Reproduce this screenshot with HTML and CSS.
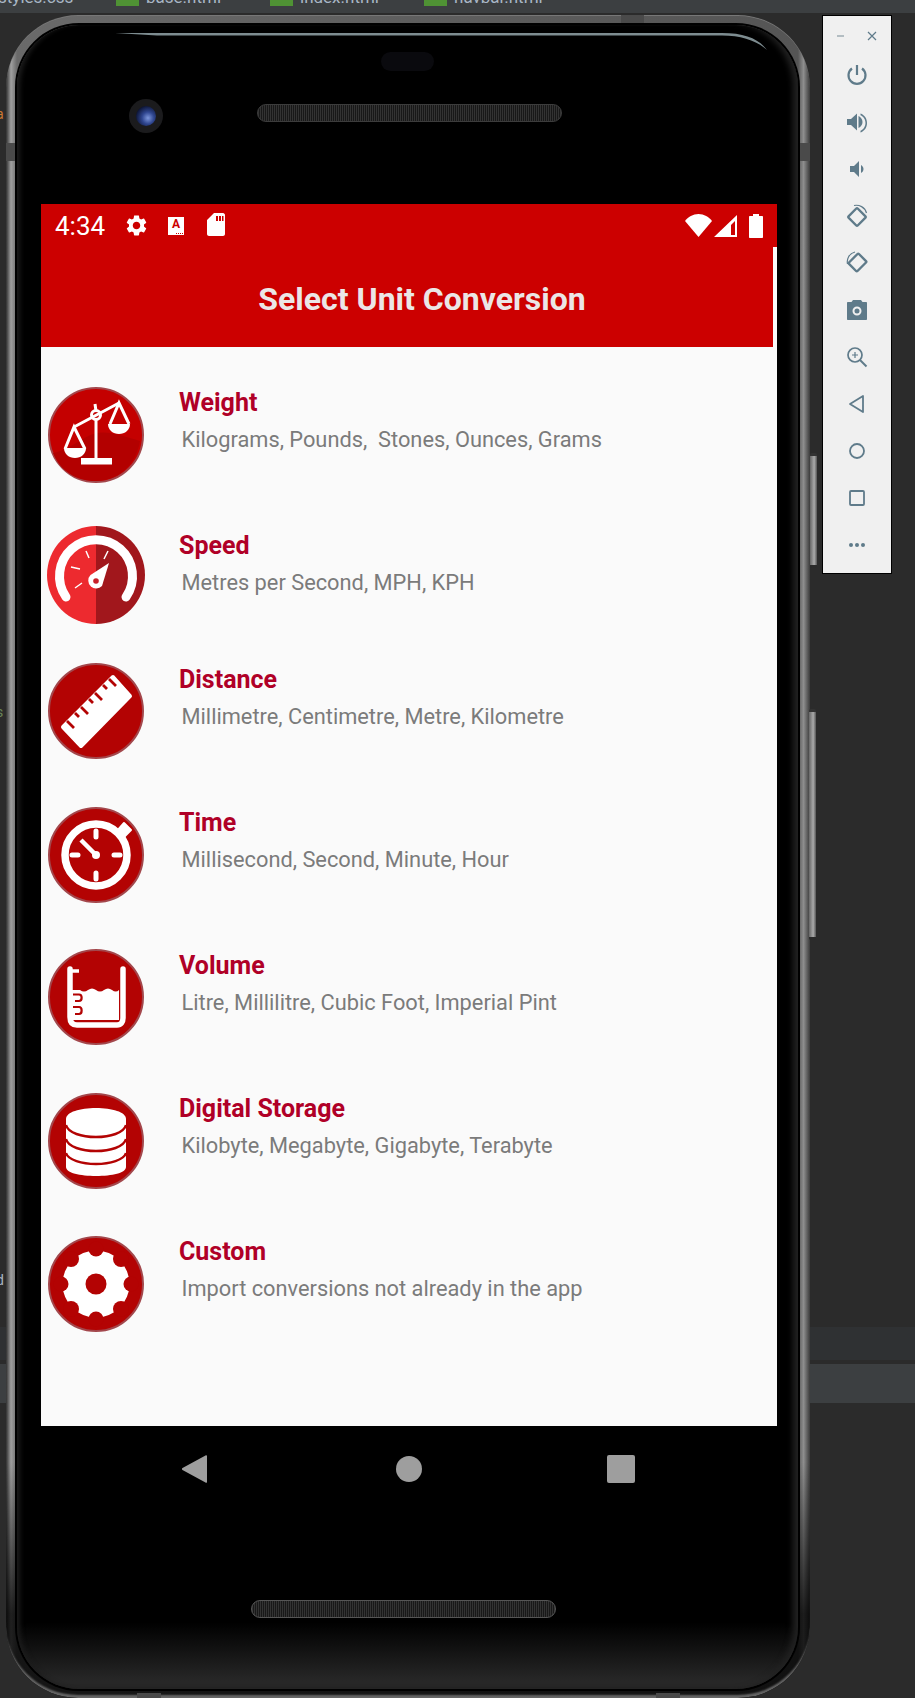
FILE: index.html
```html
<!DOCTYPE html>
<html lang="en">
<head>
    <meta charset="UTF-8">
    <title>Select Unit Conversion</title>
    <link rel="stylesheet" href="styles.css">
</head>
<body>

<!-- IDE behind the emulator -->
<div class="ide-tabs">
    <span class="tab tab-first">styles.css</span>
    <span class="tab"><i></i>base.html</span>
    <span class="tab"><i></i>index.html</span>
    <span class="tab"><i></i>navbar.html</span>
</div>
<div class="band band-a"></div>
<div class="band band-b"></div>
<span class="edge edge-a">a</span>
<span class="edge edge-s">s</span>
<span class="edge edge-d">d</span>

<div class="desk">
    <div class="phone">
        <span class="notch notch-lt"></span>
        <span class="notch notch-rt"></span>
        <span class="notch notch-top"></span>
        <span class="notch notch-bl"></span>
        <span class="notch notch-br"></span>
        <span class="side-btn side-power"></span>
        <span class="side-btn side-volume"></span>

        <div class="bezel">
            <svg class="glare" width="781" height="40" viewBox="0 0 781 40">
                <path d="M98 8H705C728 8 742 14 750 25C740 16 725 10.500 705 10.500H140z" fill="#7d8c90"/>
            </svg>

            <div class="hw-top">
                <div class="sensor"></div>
                <div class="cam-row">
                    <div class="camera"><span class="lens"></span></div>
                    <div class="speaker"></div>
                </div>
            </div>

            <div class="screen">
                <div class="status">
                    <span class="clock">4:34</span>
                    <svg class="st-gear" width="25" height="25" viewBox="0 0 24 24"><path fill="#fff" d="M19.14 12.94c.04-.3.06-.61.06-.94 0-.32-.02-.64-.07-.94l2.03-1.58c.18-.14.23-.41.12-.61l-1.92-3.32c-.12-.22-.37-.29-.59-.22l-2.39.96c-.5-.38-1.03-.7-1.62-.94l-.36-2.54c-.04-.24-.24-.41-.48-.41h-3.84c-.24 0-.43.17-.47.41l-.36 2.54c-.59.24-1.13.57-1.62.94l-2.39-.96c-.22-.08-.47 0-.59.22L2.74 8.87c-.12.21-.08.47.12.61l2.03 1.58c-.05.3-.09.63-.09.94s.02.64.07.94l-2.03 1.58c-.18.14-.23.41-.12.61l1.92 3.32c.12.22.37.29.59.22l2.39-.96c.5.38 1.03.7 1.62.94l.36 2.54c.05.24.24.41.48.41h3.84c.24 0 .44-.17.47-.41l.36-2.54c.59-.24 1.13-.56 1.62-.94l2.39.96c.22.08.47 0 .59-.22l1.92-3.32c.12-.22.07-.47-.12-.61l-2.01-1.58zM12 15.6c-1.98 0-3.6-1.62-3.6-3.6s1.62-3.6 3.6-3.6 3.6 1.62 3.6 3.6-1.62 3.6-3.6 3.6z"/></svg>
                    <span class="st-a">A<i></i></span>
                    <svg class="st-sd" width="18" height="23" viewBox="0 0 18 23"><path fill="#fff" d="M7 0H16C17 0 18 1 18 2V21C18 22 17 23 16 23H2C1 23 0 22 0 21V7zM9 3V8H11V3zM12 3V8H14V3zM15 3V8H16.5V3z"/></svg>
                    <span class="st-gap"></span>
                    <svg width="27" height="23" viewBox="0 0 27 23"><path fill="#fff" d="M0 7C3 3 8 0 13.5 0S24 3 27 7L13.5 23z"/></svg>
                    <svg class="st-signal" width="23" height="22" viewBox="0 0 23 22"><path fill="#fff" fill-rule="evenodd" d="M23 0V22H0zM21 6L17 10V20H21z"/></svg>
                    <svg class="st-batt" width="14" height="24" viewBox="0 0 14 24"><path fill="#fff" d="M4 0H10V2H13C13.600 2 14 2.400 14 3V23C14 23.600 13.600 24 13 24H1C.4 24 0 23.600 0 23V3C0 2.400 .4 2 1 2H4z"/></svg>
                </div>
                <div class="app-bar">Select Unit Conversion</div>

                <ul class="units">
                    <li class="row">
                        <svg class="ico" width="96" height="96" viewBox="0 0 96 96">
                            <circle cx="48" cy="48" r="47" fill="#c40000" stroke="#a3474c" stroke-width="2"/>
                            <path d="M5 66C25 62 35 48 50 46C62 44 78 50 92 54C88 78 70 94 48 94C28 94 12 84 5 66z" fill="#b30000"/>
                            <g fill="none" stroke="#fff" stroke-width="3">
                                <path d="M26 40L71 16M47 17L48 24"/>
                                <path d="M48 33V72"/>
                                <circle cx="48" cy="28" r="4.500"/>
                                <path d="M17 62L26 40L37 62M62 37L71 16L81 37"/>
                            </g>
                            <path d="M16 61H38C38 67 33 71 27 71S16 67 16 61zM60 37H82C82 43 77 47 71 47S60 43 60 37z" fill="#fff"/>
                            <rect x="33" y="71" width="31" height="6.500" fill="#fff"/>
                        </svg>
                        <div class="txt">
                            <h3>Weight</h3>
                            <p>Kilograms, Pounds,  Stones, Ounces, Grams</p>
                        </div>
                    </li>
                    <li class="row row-speed">
                        <svg class="ico ico-speed" width="98" height="98" viewBox="0 0 98 98">
                            <path d="M49 0A49 49 0 0 0 49 98z" fill="#ed2a2f"/>
                            <path d="M49 0A49 49 0 0 1 49 98z" fill="#a1171c"/>
                            <path d="M19 71A36.500 36.500 0 1 1 79 71" fill="none" stroke="#fff" stroke-width="9" stroke-linecap="round"/>
                            <path d="M39 25L42 32M24 41L33 43M28 62L35 57M61 25L57 33" fill="none" stroke="#fff" stroke-width="1.500"/>
                            <path d="M62 37L55 60A7.500 7.500 0 1 1 43.500 49z" fill="#fff"/>
                            <circle cx="49" cy="55" r="2.800" fill="#c8202a"/>
                        </svg>
                        <div class="txt">
                            <h3>Speed</h3>
                            <p>Metres per Second, MPH, KPH</p>
                        </div>
                    </li>
                    <li class="row">
                        <svg class="ico ico-up" width="96" height="96" viewBox="0 0 96 96">
                            <circle cx="48" cy="48" r="47" fill="#b30303" stroke="#a3474c" stroke-width="2"/>
                            <path d="M15 64L65 14L82 33L33 83z" fill="#fff" stroke="#fff" stroke-width="4" stroke-linejoin="round"/>
                            <path d="M19 58L26 65M27 50L31 54M33 44L40 51M41 36L45 40M47 30L54 37M55 22L59 26M61 16L68 23" fill="none" stroke="#b30303" stroke-width="2.800"/>
                        </svg>
                        <div class="txt">
                            <h3>Distance</h3>
                            <p>Millimetre, Centimetre, Metre, Kilometre</p>
                        </div>
                    </li>
                    <li class="row">
                        <svg class="ico" width="96" height="96" viewBox="0 0 96 96">
                            <circle cx="48" cy="48" r="47" fill="#b30303" stroke="#a3474c" stroke-width="2"/>
                            <circle cx="48" cy="48" r="31" fill="none" stroke="#fff" stroke-width="7.500"/>
                            <path d="M69 24L76 16L83 23L75 31z" fill="#fff" stroke="#fff" stroke-width="2" stroke-linejoin="round"/>
                            <path d="M48 24V30M48 66V72M24 48H30M66 48H72" stroke="#fff" stroke-width="5" stroke-linecap="round"/>
                            <path d="M33 33L48 48" stroke="#fff" stroke-width="4.500"/>
                            <circle cx="48" cy="48" r="4" fill="#fff"/>
                        </svg>
                        <div class="txt">
                            <h3>Time</h3>
                            <p>Millisecond, Second, Minute, Hour</p>
                        </div>
                    </li>
                    <li class="row">
                        <svg class="ico ico-up" width="96" height="96" viewBox="0 0 96 96">
                            <circle cx="48" cy="48" r="47" fill="#b30303" stroke="#a3474c" stroke-width="2"/>
                            <path d="M22 20V68C22 73 24 76 29 76H69C73 76 75 73 75 69V20" fill="none" stroke="#fff" stroke-width="5.500" stroke-linecap="round"/>
                            <path d="M24 22H31" stroke="#fff" stroke-width="3.500"/>
                            <path d="M32 41Q36 44 40 41T48 41T56 41T64 41T71 41V71H24V41z" fill="#fff"/>
                            <path d="M25 45.500H31C34.500 45.500 34.500 52 31 52H27M25 58H31C34.500 58 34.500 65 31 65H27" fill="none" stroke="#b30303" stroke-width="2.200"/>
                        </svg>
                        <div class="txt">
                            <h3>Volume</h3>
                            <p>Litre, Millilitre, Cubic Foot, Imperial Pint</p>
                        </div>
                    </li>
                    <li class="row">
                        <svg class="ico" width="96" height="96" viewBox="0 0 96 96">
                            <circle cx="48" cy="48" r="47" fill="#b30303" stroke="#a3474c" stroke-width="2"/>
                            <path d="M18 26C18 19 32 15 48 15S78 19 78 26V74C78 80 64 83 48 83S18 80 18 74z" fill="#fff"/>
                            <path d="M18 32C20 40 34 44 48 44S76 40 78 32M18 46C20 54 34 58 48 58S76 54 78 46M18 60C20 67 34 71 48 71S76 67 78 60" fill="none" stroke="#b30303" stroke-width="2.400"/>
                        </svg>
                        <div class="txt">
                            <h3>Digital Storage</h3>
                            <p>Kilobyte, Megabyte, Gigabyte, Terabyte</p>
                        </div>
                    </li>
                    <li class="row">
                        <svg class="ico" width="96" height="96" viewBox="0 0 96 96">
                            <circle cx="48" cy="48" r="47" fill="#b30303" stroke="#a3474c" stroke-width="2"/>
                            <circle cx="48" cy="48" r="33.500" fill="#fff"/>
                            <g fill="#b30303">
                                <circle cx="48" cy="13" r="7.500"/><circle cx="83" cy="48" r="7.500"/>
                                <circle cx="48" cy="83" r="7.500"/><circle cx="13" cy="48" r="7.500"/>
                                <circle cx="73" cy="23" r="8"/><circle cx="73" cy="73" r="8"/>
                                <circle cx="23" cy="73" r="8"/><circle cx="23" cy="23" r="8"/>
                                <circle cx="48" cy="48" r="10.500"/>
                            </g>
                        </svg>
                        <div class="txt">
                            <h3>Custom</h3>
                            <p>Import conversions not already in the app</p>
                        </div>
                    </li>
                </ul>
            </div>

            <div class="nav-keys">
                <svg width="25" height="28" viewBox="0 0 25 28"><path fill="#9e9e9e" d="M25 1V27C25 28 24 28 23.500 27.500L.5 15C-.2 14.500-.2 13.500 .5 13L23.500 .5C24 0 25 0 25 1z"/></svg>
                <span class="key-home"></span>
                <span class="key-recent"></span>
            </div>
            <div class="speaker speaker-low"></div>
        </div>
    </div>

    <!-- emulator side toolbar -->
    <div class="toolbar">
        <div class="win-btns">
            <svg width="10" height="10" viewBox="0 0 10 10"><path d="M1 5H8" stroke="#8a9aa3" stroke-width="1.200"/></svg>
            <svg width="10" height="10" viewBox="0 0 10 10"><path d="M1 1L9 9M9 1L1 9" stroke="#5f7b8a" stroke-width="1.200"/></svg>
        </div>
        <svg width="24" height="24" viewBox="0 0 24 24"><path d="M12 2V12M7 5.500A8.500 8.500 0 1 0 17 5.500" fill="none" stroke="#5f7b8a" stroke-width="2.200"/></svg>
        <svg width="24" height="24" viewBox="0 0 24 24"><path fill="#5f7b8a" d="M2 9v6h4l6 5.500V3.500L6 9H2zm11.500-3v12c2.400-1 4-3.400 4-6s-1.600-5-4-6zm2-2.500v1.800c2.900 1.200 5 4.300 5 7.700s-2.100 6.500-5 7.700v1.800c3.900-1.300 6.500-5 6.500-9.500s-2.600-8.200-6.500-9.500z"/></svg>
        <svg width="24" height="24" viewBox="0 0 24 24"><path fill="#5f7b8a" d="M18.500 12c0-1.770-1.020-3.290-2.500-4.030v8.050c1.480-.73 2.500-2.250 2.500-4.020zM5 9v6h4l5 5V4L9 9H5z"/></svg>
        <svg width="24" height="24" viewBox="0 0 24 24"><g fill="none" stroke="#5f7b8a"><rect x="5.500" y="6.500" width="13" height="13" rx="1" stroke-width="2.400" transform="rotate(45 12 13)"/><path d="M9 1.500C14 .5 20 3 21.500 9" stroke-width="1.200"/></g></svg>
        <svg width="24" height="24" viewBox="0 0 24 24"><g fill="none" stroke="#5f7b8a"><rect x="5.500" y="5.500" width="14" height="12" rx="1" stroke-width="2.400" transform="rotate(-45 12.500 11.500)"/><path d="M2.500 13C1.500 8 4 2.500 10 1" stroke-width="1.200"/></g></svg>
        <svg width="24" height="24" viewBox="0 0 24 24"><path fill="#5f7b8a" fill-rule="evenodd" d="M8 2H16L17.500 4H21C21.600 4 22 4.400 22 5V21C22 21.600 21.600 22 21 22H3C2.400 22 2 21.600 2 21V5C2 4.400 2.400 4 3 4H6.500zM12 8.500A4.500 4.500 0 1 0 12 17.500A4.500 4.500 0 1 0 12 8.500zM12 10.500A2.500 2.500 0 1 1 12 15.500A2.500 2.500 0 1 1 12 10.500z"/></svg>
        <svg width="24" height="24" viewBox="0 0 24 24"><g fill="none" stroke="#5f7b8a"><circle cx="10" cy="10" r="7" stroke-width="1.700"/><path d="M10 7V13M7 10H13" stroke-width="1.200"/><path d="M15 15L21.500 21.500" stroke-width="2"/></g></svg>
        <svg width="24" height="24" viewBox="0 0 24 24"><path d="M18 4V20L5 12z" fill="none" stroke="#5f7b8a" stroke-width="1.800" stroke-linejoin="round"/></svg>
        <svg width="24" height="24" viewBox="0 0 24 24"><circle cx="12" cy="12" r="7" fill="none" stroke="#5f7b8a" stroke-width="1.800"/></svg>
        <svg width="24" height="24" viewBox="0 0 24 24"><rect x="5" y="5" width="14" height="14" rx="1" fill="none" stroke="#5f7b8a" stroke-width="1.800"/></svg>
        <svg width="24" height="24" viewBox="0 0 24 24"><g fill="#5f7b8a"><circle cx="6" cy="12" r="2"/><circle cx="12" cy="12" r="2"/><circle cx="18" cy="12" r="2"/></g></svg>
    </div>
</div>

</body>
</html>
```

FILE: styles.css
```css
/* reset */
*{margin: 0;padding: 0;box-sizing: border-box;list-style: none;}
html,body{height: 1698px;overflow: hidden;}
body{position: relative;background: #2b2b2b;font-family: Roboto, "Liberation Sans", sans-serif;}

/* IDE behind */
.ide-tabs{height: 13px;background: #3c3f41;display: flex;overflow: hidden;color: #a9b7c6;font: 17px/16px Roboto, sans-serif;}
.tab{width: 154px;display: flex;gap: 7px;margin-top: -11px;}
.tab i{width: 23px;height: 17px;background: #4f9234;}
.tab-first{width: 118px;margin-left: -2px;}
.band{position: absolute;left: 0;width: 915px;}
.band-a{top: 1327px;height: 33px;background: #2f3133;}
.band-b{top: 1364px;height: 39px;background: #3c3f41;}
.edge{position: absolute;left: -4px;font-size: 14px;}
.edge-a{top: 106px;color: #cc7832;}
.edge-s{top: 704px;color: #6a8759;}
.edge-d{top: 1272px;color: #a9b7c6;}

.desk{display: flex;padding: 2px 0 0 6px;gap: 12px;align-items: flex-start;position: relative;}

/* phone shell */
.phone{width: 804px;height: 1683px;padding: 10px 12px 9px 11px;border-radius: 72px;position: relative;background: linear-gradient(180deg,rgba(0,0,0,0) 0,rgba(0,0,0,0) 86%,rgba(0,0,0,.8) 95%,rgba(0,0,0,.8) 100%),linear-gradient(90deg,#2e2e2e 0,#a0a0a0 5px,#6a6a6a 11px,#5e5e5e 50%,#555 98.500%,#8e8e8e 99.200%,#3a3a3a 100%);box-shadow: inset 0 1px 0 #777,inset 0 -4px 2px -1px #666;}
.bezel{height: 100%;border-radius: 62px;background: linear-gradient(180deg,#000 0,#000 96%,#272727 99.500%);box-shadow: 0 0 0 2px #000,inset 6px 0 5px -3px #1c1c1c,inset -8px 0 6px -3px #222;position: relative;overflow: hidden;}
.glare{position: absolute;left: 0;top: 0;}
.notch{position: absolute;background: #4a4a4a;}
.notch-lt{left: 0;top: 128px;width: 12px;height: 18px;}
.notch-rt{right: 0;top: 128px;width: 12px;height: 18px;}
.notch-top{left: 615px;top: 0;width: 23px;height: 10px;}
.notch-bl{left: 131px;bottom: 0;width: 24px;height: 5px;}
.notch-br{left: 650px;bottom: 0;width: 24px;height: 5px;}
.side-btn{position: absolute;width: 7px;border-radius: 2px;background: linear-gradient(90deg,#666,#aaa 60%,#555);border-top: 3px solid #333;border-bottom: 3px solid #2a2a2a;}
.side-power{right: -7px;top: 438px;height: 115px;}
.side-volume{right: -6px;top: 694px;height: 231px;}

.hw-top{height: 179px;padding-top: 27px;}
.sensor{width: 53px;height: 19px;margin-left: 364px;border-radius: 10px;background: #0a0a0e;}
.cam-row{display: flex;align-items: center;margin-top: 28px;margin-left: 112px;gap: 94px;}
.cam-row .speaker{margin-top: -6px;}
.camera{width: 34px;height: 34px;border-radius: 50%;background: #1b1b1d;display: flex;align-items: center;justify-content: center;}
.lens{width: 20px;height: 20px;border-radius: 50%;background: radial-gradient(circle at 60% 60%,#7d97dc 0,#2f4690 35%,#0b1230 75%);}
.speaker{width: 305px;height: 18px;border-radius: 9px;border: 1px solid #3c3c3c;background: repeating-linear-gradient(90deg,#333 0,#333 1px,#181818 1px,#181818 2px);}
.speaker-low{margin: 117px 0 0 234px;border-color: #555;}

/* screen */
.screen{width: 736px;height: 1222px;margin-left: 24px;background: #fafafa;}
.status{height: 43px;background: #cc0000;display: flex;align-items: center;padding: 0 14px 0 14px;color: #fff;}
.clock{font-size: 26px;width: 69px;}
.st-gear{margin-right: 19px;}
.st-a{width: 16px;height: 18px;background: #fff;color: #cc0000;font: bold 12px/15px Roboto, sans-serif;text-align: center;display: block;margin-right: 23px;position: relative;}
.st-a i{position: absolute;right: 1px;bottom: 1px;width: 7px;border-bottom: 1px dotted #cc0000;}
.st-sd{margin-top: -2px;}
.st-gap{flex: 1;}
.st-signal{margin: 0 12px 0 2px;}
.app-bar{width: 732px;height: 100px;background: #cc0000;color: #ebe6e6;font-size: 32px;font-weight: 700;line-height: 105px;text-align: center;padding-left: 30px;}

.units{display: block;}
.row{display: flex;height: 143px;padding: 40px 0 0 7px;gap: 35px;}
.row-speed{height: 134px;}
.ico{display: block;flex: none;}
.ico-speed{margin: -4px -1px 0 -1px;}
.ico-up{margin-top: -1px;}
.txt{flex: 1;}
.txt h3{font-size: 25px;font-weight: 700;line-height: 32px;color: #b00027;}
.txt p{margin-top: 7px;padding-left: 2.500px;font-size: 21.800px;line-height: 28px;color: #7b7b7b;white-space: pre;}

/* nav keys */
.nav-keys{display: flex;align-items: center;margin: 29px 0 0 165px;height: 28px;}
.key-home{width: 26px;height: 26px;border-radius: 50%;background: #9e9e9e;margin-left: 189px;}
.key-recent{width: 28px;height: 28px;border-radius: 2px;background: #9e9e9e;margin-left: 185px;}

/* toolbar */
.toolbar{width: 70px;height: 559px;background: #f0f0f0;border: 1px solid #000;display: flex;flex-direction: column;align-items: center;gap: 23px;padding-top: 15px;}
.win-btns{width: 100%;height: 10px;margin-bottom: -1px;display: flex;justify-content: space-between;padding: 0 14px 0 13px;}
```
